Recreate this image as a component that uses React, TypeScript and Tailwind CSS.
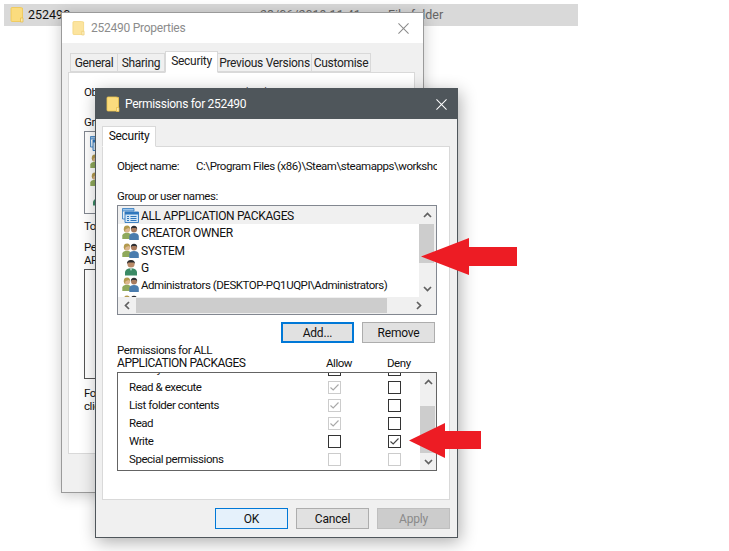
import { ReactNode } from "react";

const Folder = ({ className = "" }: { className?: string }) => <svg viewBox="0 0 14 16" className={className}>
  <path d="M1 1.5 Q1 .5 2 .5 H10 L12.5 1 V14.5 H2 Q1 14.5 1 13.5 Z" fill="#fbdc7e" stroke="#f0c64e" strokeWidth=".8" />
  <path d="M10.5 11 H13 V15 H10.5 Z" fill="#fbe9a8" stroke="#e8bc44" strokeWidth=".7" />
</svg>;

const Users = () => <svg viewBox="0 0 17 15" className="h-[15px] w-[17px] shrink-0">
  <circle cx="5" cy="4.4" r="3.1" fill="#dcb78e" />
  <path d="M1.8 5 Q1.4 .6 5.2 .6 Q8.2 .8 8 4 L6.8 3 Q4 3.4 3.2 4.8 L3.2 7.5 Z" fill="#b39a4e" />
  <path d="M.3 14 V10.5 Q1 7.8 5 7.8 Q8.5 7.8 9 10.5 V14 Z" fill="#8fa95b" />
  <circle cx="12" cy="4.6" r="3" fill="#a87b5e" />
  <path d="M8.8 4.4 Q8.8 .8 12 .8 Q15.2 .8 15.2 4.4 L14 3 H10 Z" fill="#2f3034" />
  <path d="M7.3 15 V11 Q8 8 12 8 Q16.2 8 16.8 11 V15 Z" fill="#4a7cae" />
</svg>;

const User = () => <svg viewBox="0 0 17 17" className="h-[17px] w-[17px] shrink-0">
  <circle cx="9" cy="5" r="3.6" fill="#b98a68" />
  <path d="M5 5 Q4.8 1 9 1 Q13 1 13 5 L12 3.6 H6.4 Z" fill="#2a2a2c" />
  <path d="M3 16.5 V13 Q3.6 9.2 9 9.2 Q14.4 9.2 15 13 V16.5 Z" fill="#3b8a66" />
  <path d="M8 9.5 H10 L9 12 Z" fill="#e8f2ee" />
</svg>;

const Packages = () => <svg viewBox="0 0 17 15" className="h-[15px] w-[17px] shrink-0">
  <path d="M.5 .5 H12 V3 H.5 Z" fill="#9cc4ea" stroke="#2f77bd" strokeWidth=".8" />
  <path d="M.5 3 V11 H3" fill="#dcebf8" stroke="#2f77bd" strokeWidth=".8" />
  <path d="M3 4 H16.5 V14.5 H3 Z" fill="#d2e6f7" stroke="#2f77bd" strokeWidth=".9" />
  <path d="M3 4 H16.5 V6.5 H3 Z" fill="#2f77bd" />
  <path d="M5 8.5 H7 M8.5 8.5 H14.5 M5 10.5 H7 M8.5 10.5 H14.5 M5 12.5 H7 M8.5 12.5 H14.5" stroke="#2f77bd" strokeWidth="1.1" />
</svg>;

const Chevron = ({ dir }: { dir: "up" | "down" | "left" | "right" }) => {
  const d = { up: "M1 6 L4.5 2.5 L8 6", down: "M1 3 L4.5 6.5 L8 3", left: "M6 1 L2.5 4.5 L6 8", right: "M3 1 L6.5 4.5 L3 8" }[dir];
  return <svg viewBox="0 0 9 9" className="h-[9px] w-[9px]"><path d={d} fill="none" stroke="#606060" strokeWidth="1.7" /></svg>;
};

const Close = ({ color }: { color: string }) => <svg viewBox="0 0 12 12" className="h-[11px] w-[11px]"><path d="M.5 .5 L11.5 11.5 M11.5 .5 L.5 11.5" stroke={color} strokeWidth="1.1" fill="none" /></svg>;

const Check = ({ state }: { state: "off" | "on" | "grayOn" | "grayOff" }) => {
  const gray = state === "grayOn" || state === "grayOff";
  return <span className={`flex h-[13px] w-[13px] items-center justify-center border ${gray ? "border-[#cccccc]" : "border-[#333333]"} bg-white`}>
    {(state === "on" || state === "grayOn") && <svg viewBox="0 0 11 11" className="h-[11px] w-[11px]"><path d="M1.5 5.5 L4.2 8 L9.5 2.5" fill="none" stroke={gray ? "#a8a8a8" : "#444444"} strokeWidth="1.1" /></svg>}
  </span>;
};

const Btn = ({ children, className = "" }: { children: ReactNode; className?: string }) =>
  <div className={`flex items-center justify-center text-[12px] leading-none ${className}`}>{children}</div>;

const Tab = ({ label, active, className = "" }: { label: string; active?: boolean; className?: string }) =>
  <div className={`flex items-center justify-center whitespace-nowrap border border-[#d9d9d9] ${active ? "relative z-10 -mb-px h-[22px] border-b-white bg-white pb-[3px]" : "mt-[2px] h-[19px] border-l-0 bg-[#f0f0f0]"} ${className}`}>{label}</div>;

const listRows = [
  { icon: <Packages />, name: "ALL APPLICATION PACKAGES", caps: true },
  { icon: <Users />, name: "CREATOR OWNER", caps: true },
  { icon: <Users />, name: "SYSTEM", caps: true },
  { icon: <User />, name: "G", caps: true },
  { icon: <Users />, name: "Administrators (DESKTOP-PQ1UQPI\\Administrators)", caps: false },
  { icon: <Users />, name: "Users", caps: false },
];

const permRows: { name: string; allow: "off" | "on" | "grayOn" | "grayOff"; deny: "off" | "on" | "grayOn" | "grayOff" }[] = [
  { name: "Modify", allow: "off", deny: "off" },
  { name: "Read & execute", allow: "grayOn", deny: "off" },
  { name: "List folder contents", allow: "grayOn", deny: "off" },
  { name: "Read", allow: "grayOn", deny: "off" },
  { name: "Write", allow: "off", deny: "on" },
  { name: "Special permissions", allow: "grayOff", deny: "grayOff" },
];

function BackWindow() {
  return <div className="absolute left-[61px] top-[12px] flex h-[481px] w-[363px] flex-col border border-[#9a9a9a] bg-[#f0f0f0] shadow-[0_2px_14px_rgba(0,0,0,0.22)]">
    <div className="flex h-[30px] shrink-0 items-center justify-between bg-white pl-[10px] pr-[14px] text-[#8c8c8c]">
      <div className="flex items-center"><Folder className="h-[15px] w-[13px] opacity-75" /><span className="ml-[6px] text-[12px] tracking-[-0.25px]">252490 Properties</span></div>
      <Close color="#8a8a8a" />
    </div>
    <div className="flex pl-[8px] pt-[8px] text-[12px] tracking-[-0.3px] text-[#222222]">
      <Tab label="General" className="w-[48px] !border-l" />
      <Tab label="Sharing" className="w-[47px]" />
      <Tab label="Security" active className="w-[53px]" />
      <Tab label="Previous Versions" className="w-[94px]" />
      <Tab label="Customise" className="w-[59px]" />
    </div>
    <div className="ml-[6px] h-[382px] w-[347px] border border-[#d9d9d9] bg-white pl-[15px] pt-[11px] text-[11.5px] leading-[16px] tracking-[-0.45px] text-[#111111]">
      <div className="flex h-[16px] whitespace-nowrap"><span className="w-[79px] shrink-0">Object name:</span><span>C:\Program Files (x86)\Steam\steamapps\workshop</span></div>
      <div className="mt-[14px] h-[16px] whitespace-nowrap">Group or user names:</div>
      <div className="mt-[1px] h-[83px] w-[320px] border border-[#828790] pl-[5px] pt-[2px]">
        <div className="flex h-[18px] items-center"><Packages /></div>
        <div className="flex h-[18px] items-center"><Users /></div>
        <div className="flex h-[18px] items-center"><Users /></div>
        <div className="flex h-[18px] items-center"><User /></div>
      </div>
      <div className="mt-[4px] h-[16px] whitespace-nowrap">To change permissions, click Edit.</div>
      <div className="mt-[7px] h-[13px] whitespace-nowrap leading-[13px]">Permissions for ALL</div>
      <div className="h-[13px] whitespace-nowrap leading-[13px]">APPLICATION PACKAGES</div>
      <div className="mt-[2px] h-[110px] w-[320px] border border-[#555555]" />
      <div className="mt-[8px] h-[13px] whitespace-nowrap leading-[13px]">For special permissions or advanced settings,</div>
      <div className="h-[13px] whitespace-nowrap leading-[13px]">click Advanced.</div>
    </div>
  </div>;
}

function FrontWindow() {
  return <div className="absolute left-[95px] top-[88px] flex h-[450px] w-[363px] flex-col border border-[#4f565b] bg-[#f0f0f0] shadow-[2px_4px_16px_rgba(0,0,0,0.32)]">
    <div className="flex h-[30px] shrink-0 items-center justify-between bg-[#4f565b] pl-[10px] pr-[10px] text-white">
      <div className="flex items-center"><Folder className="h-[17px] w-[14px]" /><span className="ml-[5px] text-[12px] tracking-[-0.3px]">Permissions for 252490</span></div>
      <Close color="#ffffff" />
    </div>
    <div className="pl-[6px] pt-[7px]">
      <div className="relative z-10 -mb-px flex h-[21px] w-[54px] items-center justify-center border border-[#d9d9d9] border-b-white bg-white pb-[2px] text-[12px] tracking-[-0.3px]">Security</div>
    </div>
    <div className="ml-[6px] h-[354px] w-[348px] border border-[#d9d9d9] bg-white px-[14px] pt-[11px] text-[11.5px] tracking-[-0.45px] text-[#111111]">
      <div className="flex h-[16px] w-[320px] items-center overflow-hidden whitespace-nowrap leading-[16px]"><span className="w-[79px] shrink-0">Object name:</span><span>C:\Program Files (x86)\Steam\steamapps\workshop</span></div>
      <div className="mt-[14px] h-[16px] leading-[16px]">Group or user names:</div>
      <div className="mt-[1px] flex h-[110px] w-[320px] flex-col border border-[#828790]">
        <div className="flex min-h-0 flex-1">
          <div className="flex-1 overflow-hidden">
            {listRows.map((r, i) => <div key={r.name} className={`flex items-center pl-[4px] whitespace-nowrap ${i === 0 ? "h-[18px] bg-[#f0f0f0]" : "h-[17.4px]"}`}>
              {r.icon}<span className={`ml-[2px] pt-[1px] ${r.caps ? "text-[12px] tracking-[-0.35px]" : ""}`}>{r.name}</span>
            </div>)}
          </div>
          <div className="flex w-[17px] flex-col bg-[#f0f0f0]">
            <div className="flex h-[18px] items-center justify-center"><Chevron dir="up" /></div>
            <div className="h-[39px] w-[15px] bg-[#cdcdcd]" />
            <div className="flex flex-1 items-end justify-center pb-[4px]"><Chevron dir="down" /></div>
          </div>
        </div>
        <div className="flex h-[17px] shrink-0 items-center bg-[#f0f0f0]">
          <div className="flex w-[18px] justify-center"><Chevron dir="left" /></div>
          <div className="h-[15px] w-[251px] bg-[#cdcdcd]" />
          <div className="flex flex-1 justify-center pl-[14px]"><Chevron dir="right" /></div>
        </div>
      </div>
      <div className="mt-[7px] flex w-[318px] justify-end gap-[8px] tracking-[-0.2px]">
        <Btn className="h-[21px] w-[73px] border-2 border-[#0078d7] bg-[#e1e1e1]">Add...</Btn>
        <Btn className="h-[21px] w-[73px] border border-[#adadad] bg-[#e1e1e1]">Remove</Btn>
      </div>
      <div className="pt-[1px] leading-[13px]">
        <div>Permissions for ALL</div>
        <div className="flex">
          <span className="w-[209px] text-[12px] tracking-[-0.45px]">APPLICATION PACKAGES</span>
          <span className="w-[61px]">Allow</span>
          <span>Deny</span>
        </div>
      </div>
      <div className="mt-[2px] flex h-[99px] w-[320px] overflow-hidden border border-[#646464]">
        <div className="-mt-[13px] flex-1">
          {permRows.map(r => <div key={r.name} className="flex h-[18px] items-center pl-[11px]">
            <span className="w-[199px] pt-[1px]">{r.name}</span>
            <Check state={r.allow} />
            <span className="w-[47px]" />
            <Check state={r.deny} />
          </div>)}
        </div>
        <div className="flex w-[16px] flex-col bg-[#f0f0f0]">
          <div className="flex h-[33px] items-start justify-center pt-[5px]"><Chevron dir="up" /></div>
          <div className="h-[47px] w-[15px] bg-[#cdcdcd]" />
          <div className="flex flex-1 items-center justify-center"><Chevron dir="down" /></div>
        </div>
      </div>
    </div>
    <div className="mt-[8px] flex gap-[8px] pl-[119px] tracking-[-0.2px]">
      <Btn className="h-[21px] w-[73px] border border-[#0078d7] bg-[#e5f1fb]">OK</Btn>
      <Btn className="h-[21px] w-[73px] border border-[#adadad] bg-[#e1e1e1]">Cancel</Btn>
      <Btn className="h-[21px] w-[73px] border border-[#bfbfbf] bg-[#cccccc] text-[#8a8a8a]">Apply</Btn>
    </div>
  </div>;
}

const Arrow = ({ className, head, w, h, y0, y1 }: { className: string; head: number; w: number; h: number; y0: number; y1: number }) =>
  <svg viewBox={`0 0 ${w} ${h}`} width={w} height={h} className={`absolute ${className}`}>
    <path d={`M0 ${h / 2} L${head} 0 V${y0} H${w} V${y1} H${head} V${h} Z`} fill="#ed1c24" />
  </svg>;

export default function App() {
  return <div className="relative h-[551px] w-[729px] overflow-hidden bg-white font-['Roboto','Liberation_Sans',sans-serif] text-[#111111]">
    <div className="ml-[4px] mt-[4px] flex h-[22px] w-[574px] items-center bg-[#d9d9d9] pl-[6px] text-[12.5px]">
      <Folder className="h-[16px] w-[14px]" />
      <span className="ml-[4px] w-[232px]">252490</span>
      <span className="w-[128px] text-[#666666]">23/06/2019 11:41</span>
      <span className="text-[#666666]">File folder</span>
    </div>
    <BackWindow />
    <FrontWindow />
    <Arrow className="left-[421px] top-[238px]" head={48} w={96} h={37} y0={9} y1={28} />
    <Arrow className="left-[409px] top-[423px]" head={36} w={72} h={35} y0={8} y1={26} />
  </div>;
}
